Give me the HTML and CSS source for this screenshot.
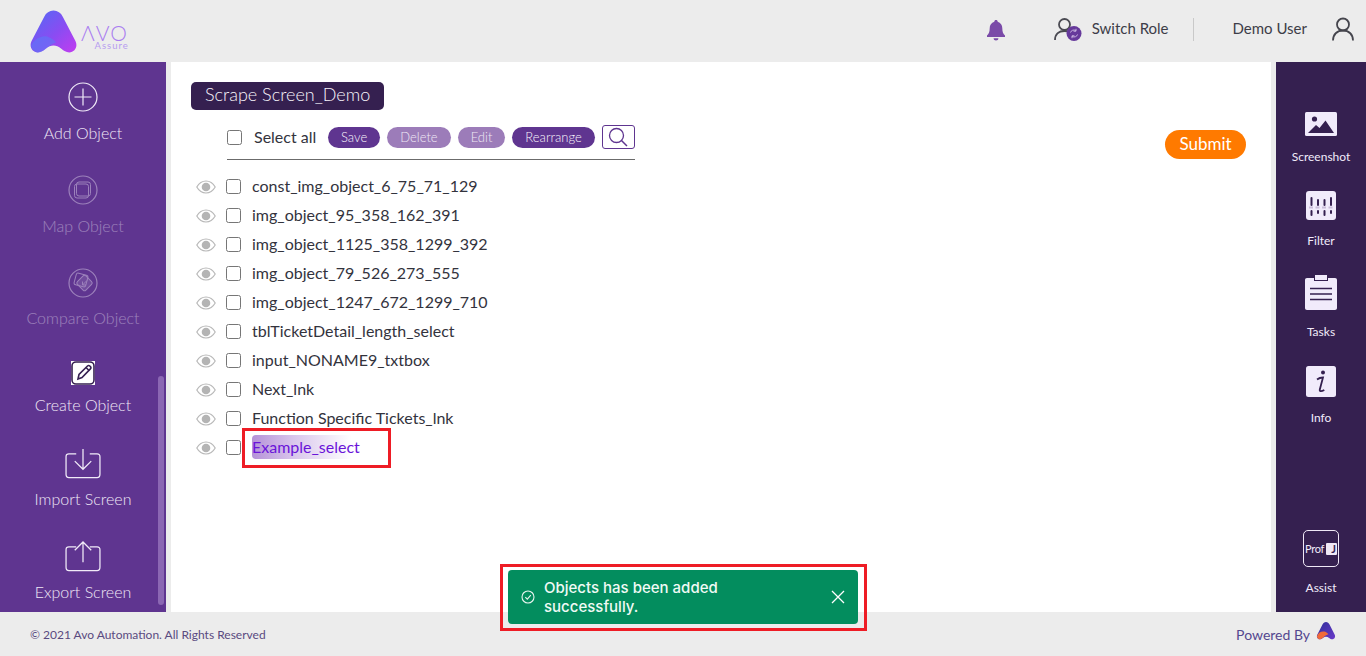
FILE: index.html
```html
<!DOCTYPE html>
<html lang="en">
<head>
<meta charset="utf-8">
<title>Avo Assure</title>
<link rel="stylesheet" href="styles.css">
</head>
<body>
<svg class="defs" width="0" height="0" aria-hidden="true">
  <defs>
    <linearGradient id="logoGrad" x1="0" y1="0" x2="1" y2="1">
      <stop offset="0" stop-color="#4f6cf5"/>
      <stop offset="0.55" stop-color="#8a4cf2"/>
      <stop offset="1" stop-color="#c23cf0"/>
    </linearGradient>
    <linearGradient id="poweredGrad" x1="0" y1="0" x2="1" y2="1">
      <stop offset="0" stop-color="#2f2f9a"/>
      <stop offset="1" stop-color="#6a3ac9"/>
    </linearGradient>
  </defs>
</svg>

<header class="topbar">
  <div class="logo">
    <svg class="logo-mark" viewBox="1.500 1.500 45 41">
      <path d="M24 2c4 0 7 2.200 9 6l12 23c2.600 5.500-.5 11-6 11-3 0-5-1.500-7.500-3.400-2.600-2-5-3.100-7.500-3.100s-4.900 1.100-7.500 3.100C14 40.500 12 42 9 42c-5.500 0-8.600-5.500-6-11L15 8c2-3.800 5-6 9-6z" fill="url(#logoGrad)"/>
      <path d="M2.500 36c3-7 10-10.500 16-9 3 .8 6 3 8 5.500-3 .8-5 2.300-7 3.800C16 38.800 13 42 9 42c-3 0-5.500-2.500-6.500-6z" fill="#5a7cf8" opacity=".55"/>
    </svg>
    <div class="logo-words">
      <span class="logo-avo">ΛVO</span>
      <span class="logo-assure">Assure</span>
    </div>
  </div>
  <div class="top-actions">
    <svg class="bell" viewBox="0 0 20 22"><path d="M10 1c1 0 1.700.7 1.700 1.700 3 .8 4.600 3.400 4.600 6.500 0 3.800 1 5.600 2.700 7.300v1.500H1v-1.500c1.700-1.700 2.700-3.500 2.700-7.300 0-3.100 1.600-5.700 4.600-6.500C8.300 1.700 9 1 10 1zM7.600 19.200h4.800c0 1.300-1 2.300-2.400 2.300s-2.400-1-2.400-2.300z" fill="#7a4aa8"/></svg>
    <div class="role">
      <svg class="role-icon" viewBox="0 0 28 24">
        <circle cx="10.500" cy="7.500" r="5.500" fill="none" stroke="#4a4a52" stroke-width="1.800"/>
        <path d="M1 23c0-6 4-9 9.500-9 2 0 3.500.4 5 1.200" fill="none" stroke="#4a4a52" stroke-width="1.800"/>
        <circle cx="20" cy="16.500" r="7.500" fill="#66399b"/>
        <path d="M16.500 15.500c.5-2 3-3.200 5.500-2M23.500 17.500c-.5 2-3 3.200-5.500 2M22 11.800v2.400h-2.400M18 21.200v-2.400h2.400" fill="none" stroke="#c9b4e0" stroke-width="1"/>
      </svg>
      <span class="top-text">Switch Role</span>
    </div>
    <span class="top-divider"></span>
    <span class="top-text user-name">Demo User</span>
    <svg class="user-icon" viewBox="0 0 22 24">
      <circle cx="11" cy="7.500" r="6" fill="none" stroke="#45454d" stroke-width="1.800"/>
      <path d="M1 23.500c0-6 4-10 10-10s10 4 10 10" fill="none" stroke="#45454d" stroke-width="1.800"/>
    </svg>
  </div>
</header>

<div class="workspace">
  <nav class="side-left">
    <div class="nav-item">
      <svg class="nav-icon" viewBox="0 0 30 30"><circle cx="15" cy="15" r="14" fill="none" stroke="#f1ebf8" stroke-width="1.200"/><path d="M15 6.500v17M6.500 15h17" stroke="#f1ebf8" stroke-width="1.200"/></svg>
      <span>Add Object</span>
    </div>
    <div class="nav-item is-off">
      <svg class="nav-icon" viewBox="0 0 30 30"><circle cx="15" cy="15" r="14" fill="none" stroke="#f1ebf8" stroke-width="1.200"/><rect x="6.500" y="9" width="14" height="14" rx="2.500" fill="none" stroke="#f1ebf8"/><rect x="8.500" y="7" width="14" height="14" rx="2.500" fill="none" stroke="#f1ebf8"/></svg>
      <span>Map Object</span>
    </div>
    <div class="nav-item is-off nav-compare">
      <svg class="nav-icon" viewBox="0 0 30 30"><circle cx="15" cy="15" r="14" fill="none" stroke="#f1ebf8" stroke-width="1.200"/><rect x="7" y="6" width="12" height="12" rx="2" transform="rotate(15 13 12)" fill="none" stroke="#f1ebf8"/><rect x="10.500" y="9" width="12" height="12" rx="2" transform="rotate(45 16.500 15)" fill="#f1ebf8" fill-opacity=".3" stroke="#f1ebf8"/><path d="M19 12.500l-4.500 4.500M14.500 13.500v3.500h3.500" fill="none" stroke="#f1ebf8"/></svg>
      <span>Compare Object</span>
    </div>
    <div class="nav-item nav-create">
      <svg class="create-icon" viewBox="0 0 24 24"><rect width="24" height="24" fill="#fff"/><rect x="1" y="1" width="22" height="22" rx="4" fill="#fff" stroke="#352050" stroke-width="1.600"/><path d="M7 18l1-4.500L16.500 5c.7-.7 1.600-.7 2.300 0l.6.6c.7.700.7 1.600 0 2.300L11 16.500z" fill="#fff" stroke="#352050" stroke-width="1.600"/><path d="M15 6.500l3 3" stroke="#352050" stroke-width="1.600"/></svg>
      <span>Create Object</span>
    </div>
    <div class="nav-item nav-wide">
      <svg class="nav-icon-wide" viewBox="0 0 38 32"><path d="M12 6H4.500C2.500 6 1.500 7 1.500 9v18c0 2 1 3.500 3 3.500h29c2 0 3-1.500 3-3.500V9c0-2-1-3-3-3H26" fill="none" stroke="#f1ebf8" stroke-width="1.300"/><path d="M19 1v21M10.500 13.500L19 22l8.500-8.500" fill="none" stroke="#f1ebf8" stroke-width="1.300"/></svg>
      <span>Import Screen</span>
    </div>
    <div class="nav-item nav-wide">
      <svg class="nav-icon-wide" viewBox="0 0 38 32"><path d="M12 6H4.500C2.500 6 1.500 7 1.500 9v18c0 2 1 3.500 3 3.500h29c2 0 3-1.500 3-3.500V9c0-2-1-3-3-3H26" fill="none" stroke="#f1ebf8" stroke-width="1.300"/><path d="M19 22V1M10.500 9.500L19 1l8.500 8.500" fill="none" stroke="#f1ebf8" stroke-width="1.300"/></svg>
      <span>Export Screen</span>
    </div>
    <span class="nav-thumb"></span>
  </nav>

  <main class="content">
    <h1 class="screen-title">Scrape Screen_Demo</h1>
    <div class="tools-row">
      <div class="toolbar">
        <label class="select-all"><span class="box"></span>Select all</label>
        <button class="pill">Save</button>
        <button class="pill is-dim">Delete</button>
        <button class="pill is-dim">Edit</button>
        <button class="pill">Rearrange</button>
        <span class="search-btn">
          <svg viewBox="0 0 22 20"><circle cx="9.500" cy="8.500" r="7" fill="none" stroke="#5f3590" stroke-width="1.300"/><path d="M14.500 13.500l5.500 5.500" stroke="#5f3590" stroke-width="1.500"/></svg>
        </span>
      </div>
      <button class="submit">Submit</button>
    </div>
    <ul class="objects">
      <li class="object"><svg class="eye"><use href="#eyeIcon"/></svg><span class="box"></span><span class="object-name">const_img_object_6_75_71_129</span></li>
      <li class="object"><svg class="eye"><use href="#eyeIcon"/></svg><span class="box"></span><span class="object-name">img_object_95_358_162_391</span></li>
      <li class="object"><svg class="eye"><use href="#eyeIcon"/></svg><span class="box"></span><span class="object-name">img_object_1125_358_1299_392</span></li>
      <li class="object"><svg class="eye"><use href="#eyeIcon"/></svg><span class="box"></span><span class="object-name">img_object_79_526_273_555</span></li>
      <li class="object"><svg class="eye"><use href="#eyeIcon"/></svg><span class="box"></span><span class="object-name">img_object_1247_672_1299_710</span></li>
      <li class="object"><svg class="eye"><use href="#eyeIcon"/></svg><span class="box"></span><span class="object-name">tblTicketDetail_length_select</span></li>
      <li class="object"><svg class="eye"><use href="#eyeIcon"/></svg><span class="box"></span><span class="object-name">input_NONAME9_txtbox</span></li>
      <li class="object"><svg class="eye"><use href="#eyeIcon"/></svg><span class="box"></span><span class="object-name">Next_lnk</span></li>
      <li class="object"><svg class="eye"><use href="#eyeIcon"/></svg><span class="box"></span><span class="object-name">Function Specific Tickets_lnk</span></li>
      <li class="object"><svg class="eye"><use href="#eyeIcon"/></svg><span class="box"></span><span class="object-name is-new">Example_select</span></li>
    </ul>
  </main>

  <aside class="side-right">
    <div class="tool tool-shot">
      <svg class="tool-icon" viewBox="0 0 32 24"><rect width="32" height="24" rx="1.500" fill="#f1ebfb"/><circle cx="9.500" cy="7" r="2.600" fill="#352050"/><path d="M3 21l8-8 3.500 3L20.500 8.500 29 21z" fill="#352050"/></svg>
      <span>Screenshot</span>
    </div>
    <div class="tool tool-filter">
      <svg class="tool-icon" viewBox="0 0 32 30"><rect x="1" width="30" height="29" rx="3" fill="#f1ebfb"/><g fill="#352050"><rect x="5.500" y="6" width="2" height="9" rx="1"/><rect x="5.500" y="19" width="2" height="6" rx="1"/><rect x="12" y="8" width="2" height="7" rx="1"/><rect x="12" y="19" width="2" height="4" rx="1"/><rect x="18.500" y="8" width="2" height="7" rx="1"/><rect x="18.500" y="19" width="2" height="6" rx="1"/><rect x="25" y="6" width="2" height="9" rx="1"/><rect x="25" y="19" width="2" height="4" rx="1"/></g><path d="M4 16.500h24" stroke="#c9bcd9" stroke-width="2" stroke-dasharray="4 2.500"/></svg>
      <span>Filter</span>
    </div>
    <div class="tool tool-tasks">
      <svg class="tool-icon" viewBox="0 0 32 35"><path d="M2 3h7v3h14V3h7c1.200 0 2 .8 2 2v28c0 1.200-.8 2-2 2H2c-1.200 0-2-.8-2-2V5c0-1.200.8-2 2-2z" fill="#f1ebfb"/><rect x="10" width="12" height="5" fill="#f1ebfb"/><path d="M5 13.500h22M5 19h22M5 24.500h22" stroke="#352050" stroke-width="1.600"/></svg>
      <span>Tasks</span>
    </div>
    <div class="tool tool-info">
      <svg class="tool-icon" viewBox="0 0 32 32"><rect x="1" width="30" height="31" rx="2.500" fill="#f1ebfb"/><circle cx="18" cy="6.500" r="2" fill="#352050"/><path d="M12 13.500c2-1.500 4-2 6-2l-3.200 12c-.4 1.800 1 2.400 4.500.5" fill="none" stroke="#352050" stroke-width="1.800"/></svg>
      <span>Info</span>
    </div>
    <div class="tool tool-assist">
      <div class="prof"><span class="prof-text">Prof</span><span class="prof-j">J</span></div>
      <span>Assist</span>
    </div>
  </aside>
</div>

<footer class="footer">
  <span class="copyright">© 2021 Avo Automation. All Rights Reserved</span>
  <div class="powered">
    <span>Powered By</span>
    <svg class="powered-mark" viewBox="0 0 22 20"><path d="M11 0c1.800 0 3 1 3.900 2.700l5.800 11.500c1.100 2.500-.3 5-2.800 5-1.400 0-2.300-.7-3.400-1.500-1.200-.9-2.300-1.400-3.500-1.400s-2.300.5-3.500 1.400C6.400 18.500 5.500 19.200 4.100 19.200c-2.500 0-3.900-2.500-2.800-5L7.100 2.700C8 1 9.200 0 11 0z" fill="url(#poweredGrad)"/><path d="M.9 16c1-3.800 4.500-6 8-5.500 2 .3 3.500 1.500 4.800 3-2 .5-3.200 1.500-4.500 2.500-1.500 1.200-3 3.200-5 3.200-1.600 0-2.900-1.500-3.300-3.200z" fill="#f06a3a"/></svg>
  </div>
</footer>

<svg class="defs" width="0" height="0" aria-hidden="true">
  <symbol id="eyeIcon" viewBox="0 0 20 14">
    <path d="M.8 7C3 3.200 6.300 1 10 1s7 2.200 9.200 6c-2.200 3.800-5.500 6-9.200 6S3 10.800.8 7z" fill="none" stroke="#b9b9b9" stroke-width="1.200"/>
    <circle cx="10" cy="7" r="4.300" fill="#b4b4b4"/>
  </symbol>
</svg>

<span class="mark mark-name"></span>
<span class="mark mark-toast"></span>
<div class="toast">
  <svg class="toast-check" viewBox="0 0 14 14"><circle cx="7" cy="7" r="6" fill="none" stroke="#e8f5ef" stroke-width="1.100"/><path d="M4.300 7.200l2 2 3.500-4" fill="none" stroke="#e8f5ef" stroke-width="1.100"/></svg>
  <span class="toast-text">Objects has been added successfully.</span>
  <svg class="toast-close" viewBox="0 0 14 14"><path d="M1 1l12 12M13 1L1 13" stroke="#fff" stroke-width="1.300"/></svg>
</div>
</body>
</html>
```

FILE: styles.css
```css
* { box-sizing: border-box; }
html, body { height: 100%; }
body {
  margin: 0;
  height: 656px;
  overflow: hidden;
  display: flex;
  flex-direction: column;
  background: #ececec;
  font-family: "Lato", "Liberation Sans", sans-serif;
  color: #33333d;
}
.defs { position: absolute; }

.topbar {
  height: 62px;
  flex: none;
  display: flex;
  align-items: center;
  justify-content: space-between;
  padding-left: 30px;
}
.logo { display: flex; align-items: flex-start; }
.logo-mark { width: 47px; height: 43px; display: block; }
.logo-words { display: flex; flex-direction: column; align-items: flex-end; margin-left: 4px; padding-top: 13px; color: #a97df0; }
.logo-avo { font-size: 21px; line-height: 19px; letter-spacing: 1px; font-weight: 300; }
.logo-assure { font-size: 9.500px; line-height: 10px; font-weight: 400; letter-spacing: 1px; margin-top: -1px; margin-right: -1px; color: #b79cf0; }

.top-actions { display: flex; align-items: center; height: 100%; padding-bottom: 4px; }
.bell { width: 20px; height: 22px; margin-right: 48px; margin-top: 2px; margin-left: -1px; }
.role { display: flex; align-items: center; }
.role-icon { width: 28px; height: 24px; margin-right: 10px; }
.top-text { font-size: 15px; color: #3d3d48; line-height: 20px; margin-bottom: 2px; }
.top-divider { width: 1px; height: 23px; background: #c9c9c9; margin: 0 39px 0 24px; }
.user-icon { width: 22px; height: 24px; margin: 0 12px 0 25px; }

.workspace { flex: 1; min-height: 0; display: flex; background: #ececec; }

.side-left {
  position: relative;
  width: 166px;
  flex: none;
  background: #5f3590;
  padding-top: 20px;
  overflow: hidden;
  display: flex;
  flex-direction: column;
  color: #efe8f6;
}
.nav-item {
  flex: none;
  height: 93px;
  display: flex;
  flex-direction: column;
  align-items: center;
  font-size: 16px;
  font-weight: 300;
  line-height: 20px;
  gap: 11px;
}
.nav-item.is-off { opacity: .42; }
.nav-icon { width: 30px; height: 30px; display: block; }
.nav-icon-wide { width: 38px; height: 31px; display: block; }
.nav-compare { gap: 10px; }
.nav-create { height: 87px; gap: 10px; }
.nav-wide { gap: 10px; }
.create-icon { width: 24px; height: 24px; display: block; }
.nav-thumb {
  position: absolute;
  left: 158px;
  top: 314px;
  width: 6px;
  height: 229px;
  border-radius: 3px;
  background: #8b67b3;
}

.content {
  margin: 0 5px;
  flex: 1;
  min-width: 0;
  background: #fff;
  padding: 20px 25px 0 20px;
}
.screen-title {
  display: inline-block;
  margin: 0;
  height: 28px;
  width: 193px;
  padding-left: 14px;
  border-radius: 5px;
  background: #352050;
  color: #f8f5fb;
  font-size: 18px;
  line-height: 25px;
  font-weight: 300;
  vertical-align: top;
}
.tools-row { display: flex; justify-content: space-between; align-items: flex-start; margin-top: 15px; }
.toolbar {
  margin-left: 36px;
  width: 408px;
  height: 35px;
  border-bottom: 1px solid #6b6b6b;
  display: flex;
  align-items: flex-start;
  gap: 7px;
}
.select-all { flex: none; display: flex; align-items: center; height: 22px; font-size: 16px; color: #33333d; width: 94px; white-space: nowrap; }
.select-all .box { margin: 3px 12px 0 0; }
.box {
  display: inline-block;
  flex: none;
  width: 15px;
  height: 15px;
  background: #fff;
  border: 1px solid #767676;
  border-radius: 2.500px;
}
.pill {
  flex: none;
  margin-top: 2px;
  height: 21px;
  padding: 0 13px;
  border: 0;
  border-radius: 11px;
  background: #5f3590;
  color: #f8f4fb;
  font-family: inherit;
  font-size: 13px;
  font-weight: 300;
  line-height: 21px;
}
.pill.is-dim { background: #9c7cb9; color: #efe8f5; }
.search-btn {
  flex: none;
  width: 33px;
  height: 24px;
  border: 1px solid #5f3590;
  border-radius: 3px;
  display: flex;
  align-items: center;
  justify-content: center;
}
.search-btn svg { width: 22px; height: 20px; }
.submit {
  margin-top: 5px;
  width: 81px;
  height: 29px;
  border: 0;
  border-radius: 15px;
  background: #ff7a00;
  color: #fff;
  font-family: inherit;
  font-size: 17px;
  line-height: 27px;
  padding: 0 0 2px;
}
.objects { list-style: none; margin: 12px 0 0; padding: 0 0 0 5px; }
.object { height: 29px; display: flex; align-items: center; font-size: 16px; color: #33333d; }
.eye { width: 20px; height: 14px; margin-right: 10px; flex: none; }
.object .box { margin-right: 11px; }
.object-name { line-height: 24px; margin-bottom: 2px; }
.object-name.is-new {
  color: #6a14d9;
  border-radius: 4px;
  background: linear-gradient(90deg, #b592d8 0%, #d9c6ec 40%, #fff 95%);
  width: 105px;
  white-space: nowrap;
}

.side-right {
  width: 90px;
  flex: none;
  background: #352050;
  color: #f1ebfb;
  font-size: 12px;
  line-height: 16px;
  display: flex;
  flex-direction: column;
  align-items: center;
  padding-top: 50px;
}
.tool { display: flex; flex-direction: column; align-items: center; }
.tool-icon { width: 32px; height: 24px; display: block; }
.tool-shot { gap: 13px; }
.tool-filter { margin-top: 26px; gap: 12px; }
.tool-filter .tool-icon { height: 30px; }
.tool-tasks { margin-top: 26px; gap: 14px; }
.tool-tasks .tool-icon { height: 35px; }
.tool-info { margin-top: 26px; gap: 12px; }
.tool-info .tool-icon { height: 32px; }
.tool-assist { margin-top: auto; margin-bottom: 16px; gap: 13px; }
.prof {
  width: 36px;
  height: 37px;
  border: 1px solid #efe8f6;
  border-radius: 5px;
  display: flex;
  align-items: center;
  justify-content: center;
  gap: 2px;
}
.prof-text { font-size: 11px; letter-spacing: -.3px; }
.prof-j {
  width: 11px;
  height: 12px;
  background: #efe8f6;
  color: #352050;
  font-size: 11px;
  line-height: 12px;
  font-weight: 700;
  text-align: right;
  padding-right: 1px;
  border-radius: 1px;
}

.footer {
  height: 44px;
  flex: none;
  display: flex;
  align-items: center;
  justify-content: space-between;
  padding: 0 30px;
  background: #ececec;
  color: #5a4a80;
}
.copyright { font-size: 12px; }
.powered { display: flex; align-items: center; gap: 6px; font-size: 14px; color: #54478f; }
.powered-mark { width: 20px; height: 18px; margin-top: -6px; }

.mark { position: absolute; border: 3px solid #ee1c25; pointer-events: none; }
.mark-name { left: 242px; top: 428px; width: 149px; height: 40px; }
.mark-toast { left: 500px; top: 564px; width: 367px; height: 67px; }
.toast {
  position: absolute;
  left: 508px;
  top: 570px;
  width: 350px;
  height: 54px;
  border-radius: 4px;
  background: #038d5e;
  display: flex;
  align-items: center;
  color: #f0faf5;
  padding: 0 13px;
}
.toast-check { width: 14px; height: 14px; flex: none; margin-right: 9px; }
.toast-text { flex: 1; font-family: "Inter", "Noto Sans", sans-serif; font-size: 15px; line-height: 19px; font-weight: 500; max-width: 230px; }
.toast-close { position: absolute; right: 13px; top: 20px; width: 14px; height: 14px; }
```
